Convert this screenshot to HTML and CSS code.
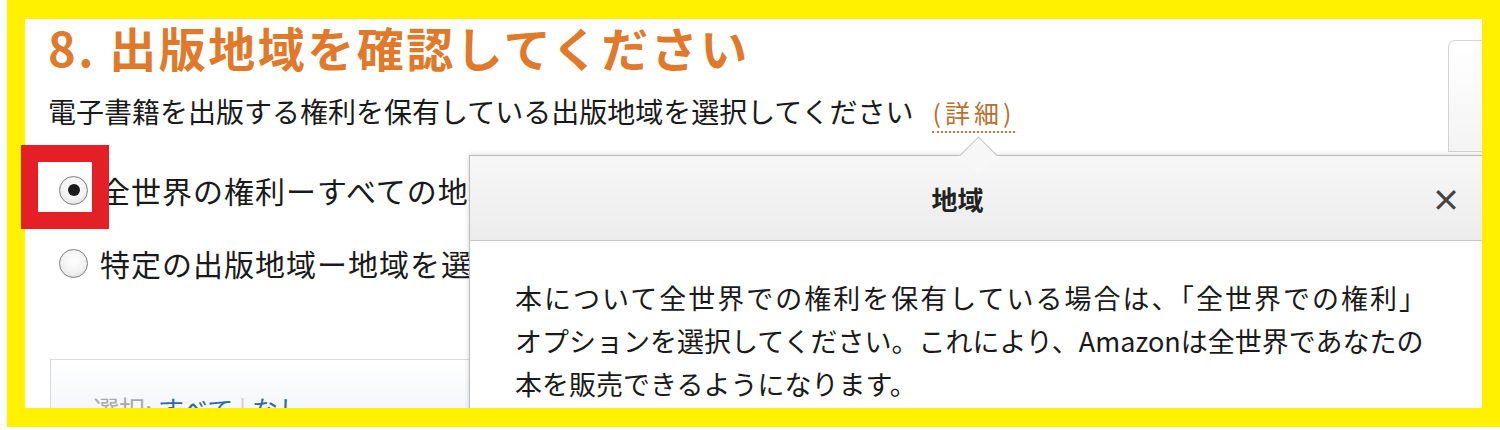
FILE: index.html
```html
<!DOCTYPE html>
<html lang="ja">
<head>
<meta charset="utf-8">
<title>出版地域</title>
<link rel="stylesheet" href="styles.css">
</head>
<body>
<div class="frame">
  <div class="content">
    <section class="main">
      <h1 class="title">8. 出版地域を確認してください</h1>
      <p class="lead">電子書籍を出版する権利を保有している出版地域を選択してください<a class="more">(詳細)</a></p>
      <div class="options">
        <label class="option"><span class="radio checked"></span><span>全世界の権利ーすべての地域</span></label>
        <label class="option"><span class="radio"></span><span>特定の出版地域ー地域を選択</span></label>
      </div>
      <div class="select-box">
        <span class="muted">選択:</span> <a class="link">すべて</a> <span class="sep">|</span> <a class="link">なし</a>
      </div>
    </section>
    <aside class="side">
      <div class="side-card"></div>
    </aside>
    <div class="popover">
      <div class="pop-head">
        <h2 class="pop-title">地域</h2>
        <span class="pop-close">×</span>
      </div>
      <div class="pop-body">
        <span class="wide">本について全世界での権利を保有している場合は、「全世界での権利」</span><br>
        オプションを選択してください。これにより、Amazonは全世界であなたの<br>
        本を販売できるようになります。
      </div>
    </div>
  </div>
  <div class="highlight"></div>
</div>
</body>
</html>
```

FILE: styles.css
```css
* { box-sizing: border-box; }

html, body {
  margin: 0;
  padding: 0;
  background: #ffffff;
}

body {
  width: 1500px;
  height: 430px;
  overflow: hidden;
  font-family: "Noto Sans CJK JP", "Noto Sans", sans-serif;
  color: #1a1a1a;
}

.frame {
  position: relative;
  margin-left: 7px;
  width: 1493px;
  height: 427px;
  border-style: solid;
  border-color: #fff100;
  border-width: 19px 18px 19px 18px;
}

.content {
  position: relative;
  display: flex;
  width: 100%;
  height: 100%;
  overflow: hidden;
  background: #ffffff;
}

.main {
  flex: 0 0 1423px;
  padding-left: 23px;
}

.title {
  margin: 0;
  font-size: 47px;
  line-height: 56px;
  font-weight: 700;
  color: #e07a2a;
  letter-spacing: 2.5px;
  white-space: nowrap;
}

.lead {
  margin: 16px 0 0 0;
  font-size: 28px;
  line-height: 40px;
  color: #1a1a1a;
  white-space: nowrap;
}

.more {
  margin-left: 19px;
  font-size: 25px;
  letter-spacing: 4px;
  color: #b8702e;
  border-bottom: 2px dotted #c87a30;
  padding-bottom: 1px;
}

.options {
  display: flex;
  flex-direction: column;
  gap: 33px;
  margin-top: 38px;
}

.option {
  display: flex;
  align-items: center;
  gap: 12px;
  height: 40px;
  padding-left: 11px;
  font-size: 30px;
  line-height: 40px;
  letter-spacing: 1px;
  white-space: nowrap;
}

.radio {
  position: relative;
  flex: 0 0 29px;
  width: 29px;
  height: 29px;
  border-radius: 50%;
  border: 1.5px solid #7d7d7d;
  background: radial-gradient(circle at 50% 40%, #ffffff 0%, #f2f2f2 55%, #d6d6d6 100%);
}

.radio.checked::after {
  content: "";
  position: absolute;
  left: 50%;
  top: 50%;
  width: 12px;
  height: 12px;
  margin: -6px 0 0 -6px;
  border-radius: 50%;
  background: #1c1c1c;
}

.select-box {
  margin: 76px 0 0 2px;
  height: 120px;
  padding: 32px 0 0 42px;
  border: 1px solid #dcdcdc;
  background: linear-gradient(#ffffff, #f5f7fa 40%, #f3f5f8);
  font-size: 26px;
  line-height: 34px;
}

.muted { color: #a9a9a9; }
.sep { color: #cfcfcf; }
.link { color: #2f6aa8; }

.side {
  flex: 1;
  padding-top: 21px;
}

.side-card {
  height: 112px;
  border: 1px solid #d4d4d4;
  border-right: none;
  border-radius: 7px 0 0 0;
  background: linear-gradient(#ffffff, #f4f4f4);
}

.popover {
  position: absolute;
  left: 444px;
  top: 136px;
  width: 1030px;
  height: 300px;
  border: 1px solid #bdbdbd;
  background: #ffffff;
  box-shadow: 0 0 5px rgba(0, 0, 0, 0.18);
}

.popover::before {
  content: "";
  position: absolute;
  left: 495px;
  top: -14px;
  width: 26px;
  height: 26px;
  background: #f7f7f7;
  border-top: 1px solid #c4c4c4;
  border-left: 1px solid #c4c4c4;
  transform: rotate(45deg);
}

.pop-head {
  display: flex;
  align-items: center;
  height: 85px;
  border-bottom: 1px solid #c9c9c9;
  background: linear-gradient(#f7f7f7, #ececec);
}

.pop-title {
  position: relative;
  flex: 1;
  margin: 0;
  padding-left: 14px;
  text-align: center;
  font-size: 26px;
  font-weight: 700;
  color: #222222;
}

.pop-close {
  width: 30px;
  margin-right: 37px;
  text-align: center;
  font-size: 30px;
  font-weight: 700;
  color: #444444;
  line-height: 1;
}

.pop-body {
  padding: 35px 0 0 45px;
  font-size: 27px;
  line-height: 43px;
  color: #1a1a1a;
  white-space: nowrap;
}

.wide {
  letter-spacing: 2px;
}

.highlight {
  position: absolute;
  left: -4px;
  top: 126px;
  width: 88px;
  height: 84px;
  border: 17px solid #e41f26;
}
```
